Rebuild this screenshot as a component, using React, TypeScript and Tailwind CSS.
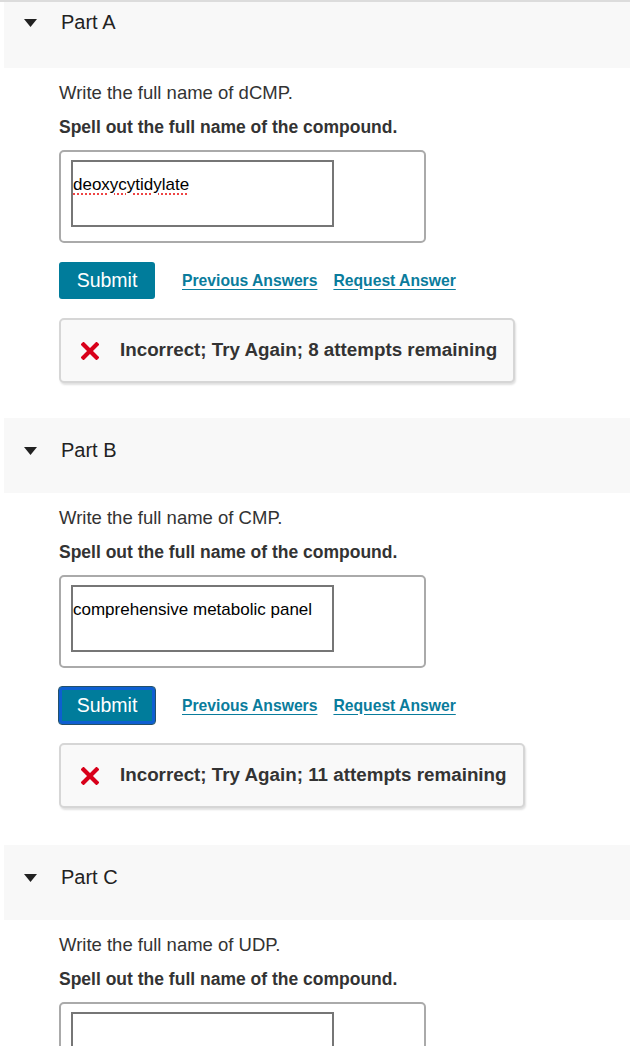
import React from "react";

const font = "font-['Liberation_Sans','Helvetica_Neue',Arial,sans-serif]";

function Triangle() {
  return (
    <svg width="13" height="8" viewBox="0 0 13 8" className="block">
      <polygon points="0,0 13,0 6.5,8" fill="#222" />
    </svg>
  );
}

function RedX() {
  return (
    <svg width="18" height="18" viewBox="0 0 18 18" className="block">
      <path d="M2.5 2.5 L15.5 15.5 M15.5 2.5 L2.5 15.5" stroke="#d8001a" strokeWidth="4.2" strokeLinecap="square" />
    </svg>
  );
}

type PartProps = {
  label: string;
  abbr: string;
  answer?: string;
  spell?: boolean;
  attempts?: string;
  cropTop?: boolean;
  focused?: boolean;
  last?: boolean;
  bottomGap?: string;
};

function Part({ label, abbr, answer, spell, attempts, cropTop, focused, last, bottomGap }: PartProps) {
  return (
    <section className={bottomGap ?? ""}>
      <div
        className={
          "ml-1 flex items-start gap-[24px] bg-[#f8f8f8] pl-[20px] " +
          (cropTop ? "h-[66px] pt-[10px]" : "h-[75px] pt-[22px]")
        }
      >
        <div className="mt-[7px]">
          <Triangle />
        </div>
        <div className="text-[20px] leading-[20px] text-[#222]">{label}</div>
      </div>
      <div className="pl-[59px]">
        <p className="mt-[13px] text-[18.5px] leading-[24px] text-[#333]">Write the full name of {abbr}.</p>
        <p className="mt-[10px] text-[17.5px] font-bold leading-[24px] text-[#333]">
          Spell out the full name of the compound.
        </p>
        <div className="mt-[11px] w-[367px] rounded-[5px] border-2 border-[#aaaaaa] pb-[14px] pl-[10px] pt-[8px]">
          <div className="h-[67px] w-[263px] border-2 border-[#767676] pt-[13px] text-[17px] leading-[20px] text-black">
            {answer ? (
              spell ? (
                <span className="underline decoration-[#ee4444] decoration-dotted decoration-2 underline-offset-[3px]">
                  {answer}
                </span>
              ) : (
                <span>{answer}</span>
              )
            ) : null}
          </div>
        </div>
        {!last && (
          <>
            <div className="mt-[19px] flex items-center">
              <button
                className={
                  "h-[37px] w-[96px] rounded-[3px] bg-[#007c9b] text-[19.5px] text-white " +
                  (focused ? "outline outline-1 outline-offset-0 outline-[#23506a] ring-[3px] ring-inset ring-[#0e5fd1]" : "")
                }
              >
                Submit
              </button>
              <a className="ml-[27px] text-[15.7px] font-bold text-[#0a7c9c] underline underline-offset-[3px]">
                Previous Answers
              </a>
              <a className="ml-[16px] text-[15.7px] font-bold text-[#0a7c9c] underline underline-offset-[3px]">
                Request Answer
              </a>
            </div>
            <div className="mt-[19px] inline-flex h-[65px] items-center rounded-[5px] border-2 border-[#d6d6d6] bg-[#f9f9f9] pl-[20px] pr-[16px] shadow-[1px_2px_2px_rgba(0,0,0,0.12)]">
              <RedX />
              <span className="ml-[21px] text-[18.8px] font-bold text-[#333]">
                Incorrect; Try Again; {attempts} attempts remaining
              </span>
            </div>
          </>
        )}
      </div>
    </section>
  );
}

export default function App() {
  return (
    <div className={"h-[1046px] w-[630px] overflow-hidden bg-white " + font}>
      <div className="h-[2px] bg-[#dcdcdc]" />
      <Part label="Part A" abbr="dCMP" answer="deoxycytidylate" spell attempts="8" cropTop bottomGap="pb-[35px]" />
      <Part label="Part B" abbr="CMP" answer="comprehensive metabolic panel" attempts="11" focused bottomGap="pb-[37px]" />
      <Part label="Part C" abbr="UDP" last />
    </div>
  );
}
